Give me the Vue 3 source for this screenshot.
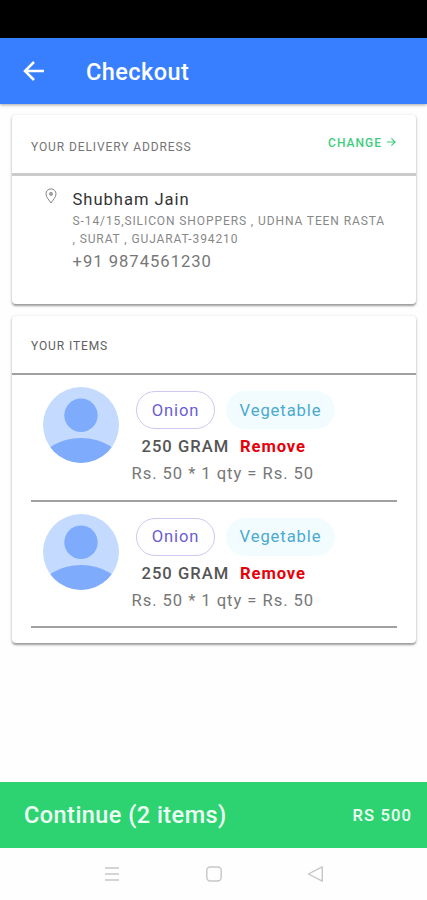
<script setup>
const items = [
  { id: 1, name: 'Onion', category: 'Vegetable', weight: '250 GRAM', price: 'Rs. 50 * 1 qty = Rs. 50' },
  { id: 2, name: 'Onion', category: 'Vegetable', weight: '250 GRAM', price: 'Rs. 50 * 1 qty = Rs. 50' },
]
</script>

<template>
  <div class="screen">
    <div class="status"></div>
    <header class="appbar">
      <svg class="back" viewBox="0 0 24 24" width="24" height="24">
        <path d="M22 12H3M12 3l-9 9 9 9" fill="none" stroke="#fff" stroke-width="2.5" />
      </svg>
      <h1>Checkout</h1>
    </header>

    <main>
      <section class="card address">
        <div class="card-head">
          <span class="label">YOUR DELIVERY ADDRESS</span>
          <span class="change">
            <span class="change-text">CHANGE</span>
            <svg viewBox="0 0 10 10" width="10" height="10">
              <path d="M0.8 5H9M5.4 1.4L9 5 5.4 8.6" fill="none" stroke="#3fce7d" stroke-width="1.2" />
            </svg>
          </span>
        </div>
        <div class="address-body">
          <svg class="pin" viewBox="0 0 12 16" width="12" height="16">
            <path d="M6 15C4.2 12.2 1 9.2 1 5.9a5 5 0 0 1 10 0C11 9.2 7.8 12.2 6 15z" fill="none" stroke="#858585" stroke-width="1" />
            <circle cx="6" cy="5.9" r="1.6" fill="#aaa" stroke="#858585" stroke-width=".7" />
          </svg>
          <div class="details">
            <div class="name">Shubham Jain</div>
            <div class="street">S-14/15,SILICON SHOPPERS , UDHNA TEEN RASTA<br>, SURAT , GUJARAT-394210</div>
            <div class="phone">+91 9874561230</div>
          </div>
        </div>
      </section>

      <section class="card items">
        <div class="card-head items-head"><span class="label dark">YOUR ITEMS</span></div>
        <article v-for="item in items" :key="item.id" class="item">
          <svg class="avatar" viewBox="0 0 76 76" width="76" height="76">
            <defs>
              <clipPath :id="'disc' + item.id"><circle cx="38" cy="38" r="38" /></clipPath>
            </defs>
            <g :clip-path="'url(#disc' + item.id + ')'">
              <rect width="76" height="76" fill="#c4dbff" />
              <circle cx="38" cy="28.3" r="16.7" fill="#7fabfc" />
              <ellipse cx="38" cy="77" rx="40" ry="26" fill="#7fabfc" />
            </g>
          </svg>
          <div class="info">
            <div class="chips">
              <span class="chip outlined">{{ item.name }}</span>
              <span class="chip tinted">{{ item.category }}</span>
            </div>
            <div class="weight"><span class="grams">{{ item.weight }}</span><span class="remove">Remove</span></div>
            <div class="price">{{ item.price }}</div>
          </div>
        </article>
      </section>
    </main>

    <footer class="continue">
      <span class="continue-text">Continue (2 items)</span>
      <span class="total">RS 500</span>
    </footer>
    <nav class="sysnav">
      <svg viewBox="0 0 18 18" width="18" height="18">
        <path d="M2 3h14M2 9h14M2 15h14" stroke="#c6c6c6" stroke-width="1.5" />
      </svg>
      <svg viewBox="0 0 18 18" width="18" height="18">
        <rect x="1.8" y="2" width="14.4" height="14" rx="3.5" fill="none" stroke="#c6c6c6" stroke-width="1.4" />
      </svg>
      <svg viewBox="0 0 18 18" width="18" height="18">
        <path d="M15.3 1.8v14.4L1.4 9z" fill="none" stroke="#c6c6c6" stroke-width="1.4" stroke-linejoin="round" />
      </svg>
    </nav>
  </div>
</template>

<style>
body { margin: 0; background: #fefefe; }
</style>

<style scoped>
.screen {
  width: 427px;
  height: 900px;
  display: flex;
  flex-direction: column;
  background: #fefefe;
  font-family: Roboto, sans-serif;
  overflow: hidden;
}
.status { height: 38px; background: #000; flex: none; }
.appbar {
  height: 66px;
  flex: none;
  display: flex;
  align-items: center;
  padding-left: 22px;
  background: #377fff;
  box-shadow: 0 1px 3px rgba(0, 0, 0, .35);
}
.appbar h1 {
  margin: 2px 0 0 40px;
  color: #fff;
  font-size: 23.5px;
  font-weight: 500;
  line-height: 28px;
  letter-spacing: .45px;
}
main { flex: 1; padding: 11px 11px 0 12px; }
.card {
  box-sizing: border-box;
  background: #fff;
  border-radius: 4px;
  box-shadow: 0 1.5px 2px rgba(0, 0, 0, .34), 0 1px 4px rgba(0, 0, 0, .1);
}
.address { height: 189px; }
.items { height: 327px; margin-top: 12px; }
.card-head {
  box-sizing: border-box;
  height: 61px;
  padding: 0 20px 0 19px;
  display: flex;
  align-items: center;
  justify-content: space-between;
  border-bottom: 3px solid #cbcbcb;
}
.items-head { height: 59px; border-bottom: 2px solid #a0a0a0; }
.label { font-size: 12px; line-height: 16px; color: #757575; letter-spacing: .9px; padding-top: 5px; }
.label.dark { color: #606060; padding-top: 3px; }
.change { display: flex; align-items: center; gap: 4px; margin-bottom: 3px; }
.change svg { margin-bottom: 2px; }
.change-text { color: #3fce7d; font-size: 12px; font-weight: 500; line-height: 16px; letter-spacing: 1px; }
.address-body { display: flex; padding: 12px 0 0 33px; }
.pin { flex: none; }
.details { margin-left: 15.5px; white-space: nowrap; padding-top: 1px; }
.name { font-size: 16.6px; line-height: 22px; color: #333; letter-spacing: .96px; }
.street { font-size: 12px; line-height: 18px; color: #888; letter-spacing: .9px; margin-top: 1px; }
.phone { font-size: 16.6px; line-height: 24px; color: #777; letter-spacing: 1px; margin-top: 2px; }
.item {
  box-sizing: border-box;
  height: 126.5px;
  margin: 0 19px;
  padding: 12px 0 0 12px;
  display: flex;
  border-bottom: 2px solid #a0a0a0;
}
.avatar { flex: none; }
.info { padding-top: 4px; margin-left: 12.5px; white-space: nowrap; }
.chips { display: flex; gap: 11px; padding-left: 4.5px; }
.chip {
  box-sizing: border-box;
  height: 38px;
  border-radius: 19px;
  display: flex;
  align-items: center;
  justify-content: center;
  font-size: 16.6px;
  letter-spacing: .9px;
}
.outlined { width: 79px; border: 1px solid #cfc8f3; color: #6b5dd3; }
.tinted { width: 109px; background: #f2fcff; color: #4aa9cf; }
.weight { display: flex; padding-left: 10px; margin-top: 6px; font-size: 16.6px; line-height: 24px; }
.grams { color: #555; font-weight: 500; letter-spacing: 1px; width: 98.5px; }
.remove { color: #e6000a; font-weight: 700; letter-spacing: .9px; }
.price { color: #777; font-size: 16.6px; line-height: 24px; letter-spacing: .95px; margin-top: 3px; }
.continue {
  height: 66px;
  flex: none;
  display: flex;
  align-items: center;
  justify-content: space-between;
  padding: 0 15px 0 24px;
  background: #2dd371;
  color: #effff5;
}
.continue-text { font-size: 23.5px; font-weight: 500; letter-spacing: .45px; }
.total { font-size: 16.6px; font-weight: 500; letter-spacing: 1.1px; }
.sysnav {
  height: 52px;
  flex: none;
  display: flex;
  align-items: center;
  justify-content: center;
  gap: 84px;
}
</style>
